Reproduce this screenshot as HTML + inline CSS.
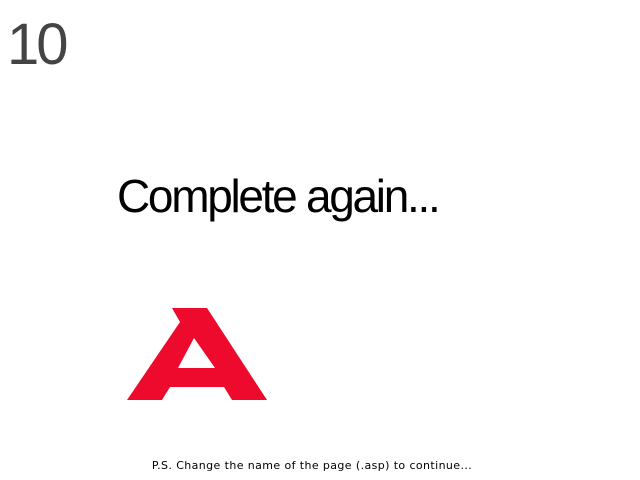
<!DOCTYPE html>
<html><head><style>
body{margin:0;width:640px;height:480px;background:#fff;position:relative;overflow:hidden;font-family:"Liberation Sans",sans-serif}
.n{position:absolute;left:7px;top:12px;font-size:58px;font-weight:300;color:#444;letter-spacing:-3px;line-height:66px}
.t{position:absolute;left:117px;top:168px;font-size:46px;line-height:56px;color:#000;letter-spacing:-2.3px;white-space:nowrap}
.f{position:absolute;left:0;width:624px;top:459px;text-align:center;font-size:11px;color:#000;font-family:"DejaVu Sans",sans-serif;letter-spacing:0.4px}
</style></head><body>
<div class="n">10</div>
<div class="t">Complete again...</div>
<svg style="position:absolute;left:0;top:0" width="640" height="480">
<path fill="#ee0a2c" fill-rule="evenodd" d="M172 308 L207 308 L267 400 L232 400 L224 387 L170 387 L162 400 L127 400 L180 322 Z M194 338 L215 368 L178 368 Z"/>
</svg>
<div class="f">P.S. Change the name of the page (.asp) to continue...</div>
</body></html>
